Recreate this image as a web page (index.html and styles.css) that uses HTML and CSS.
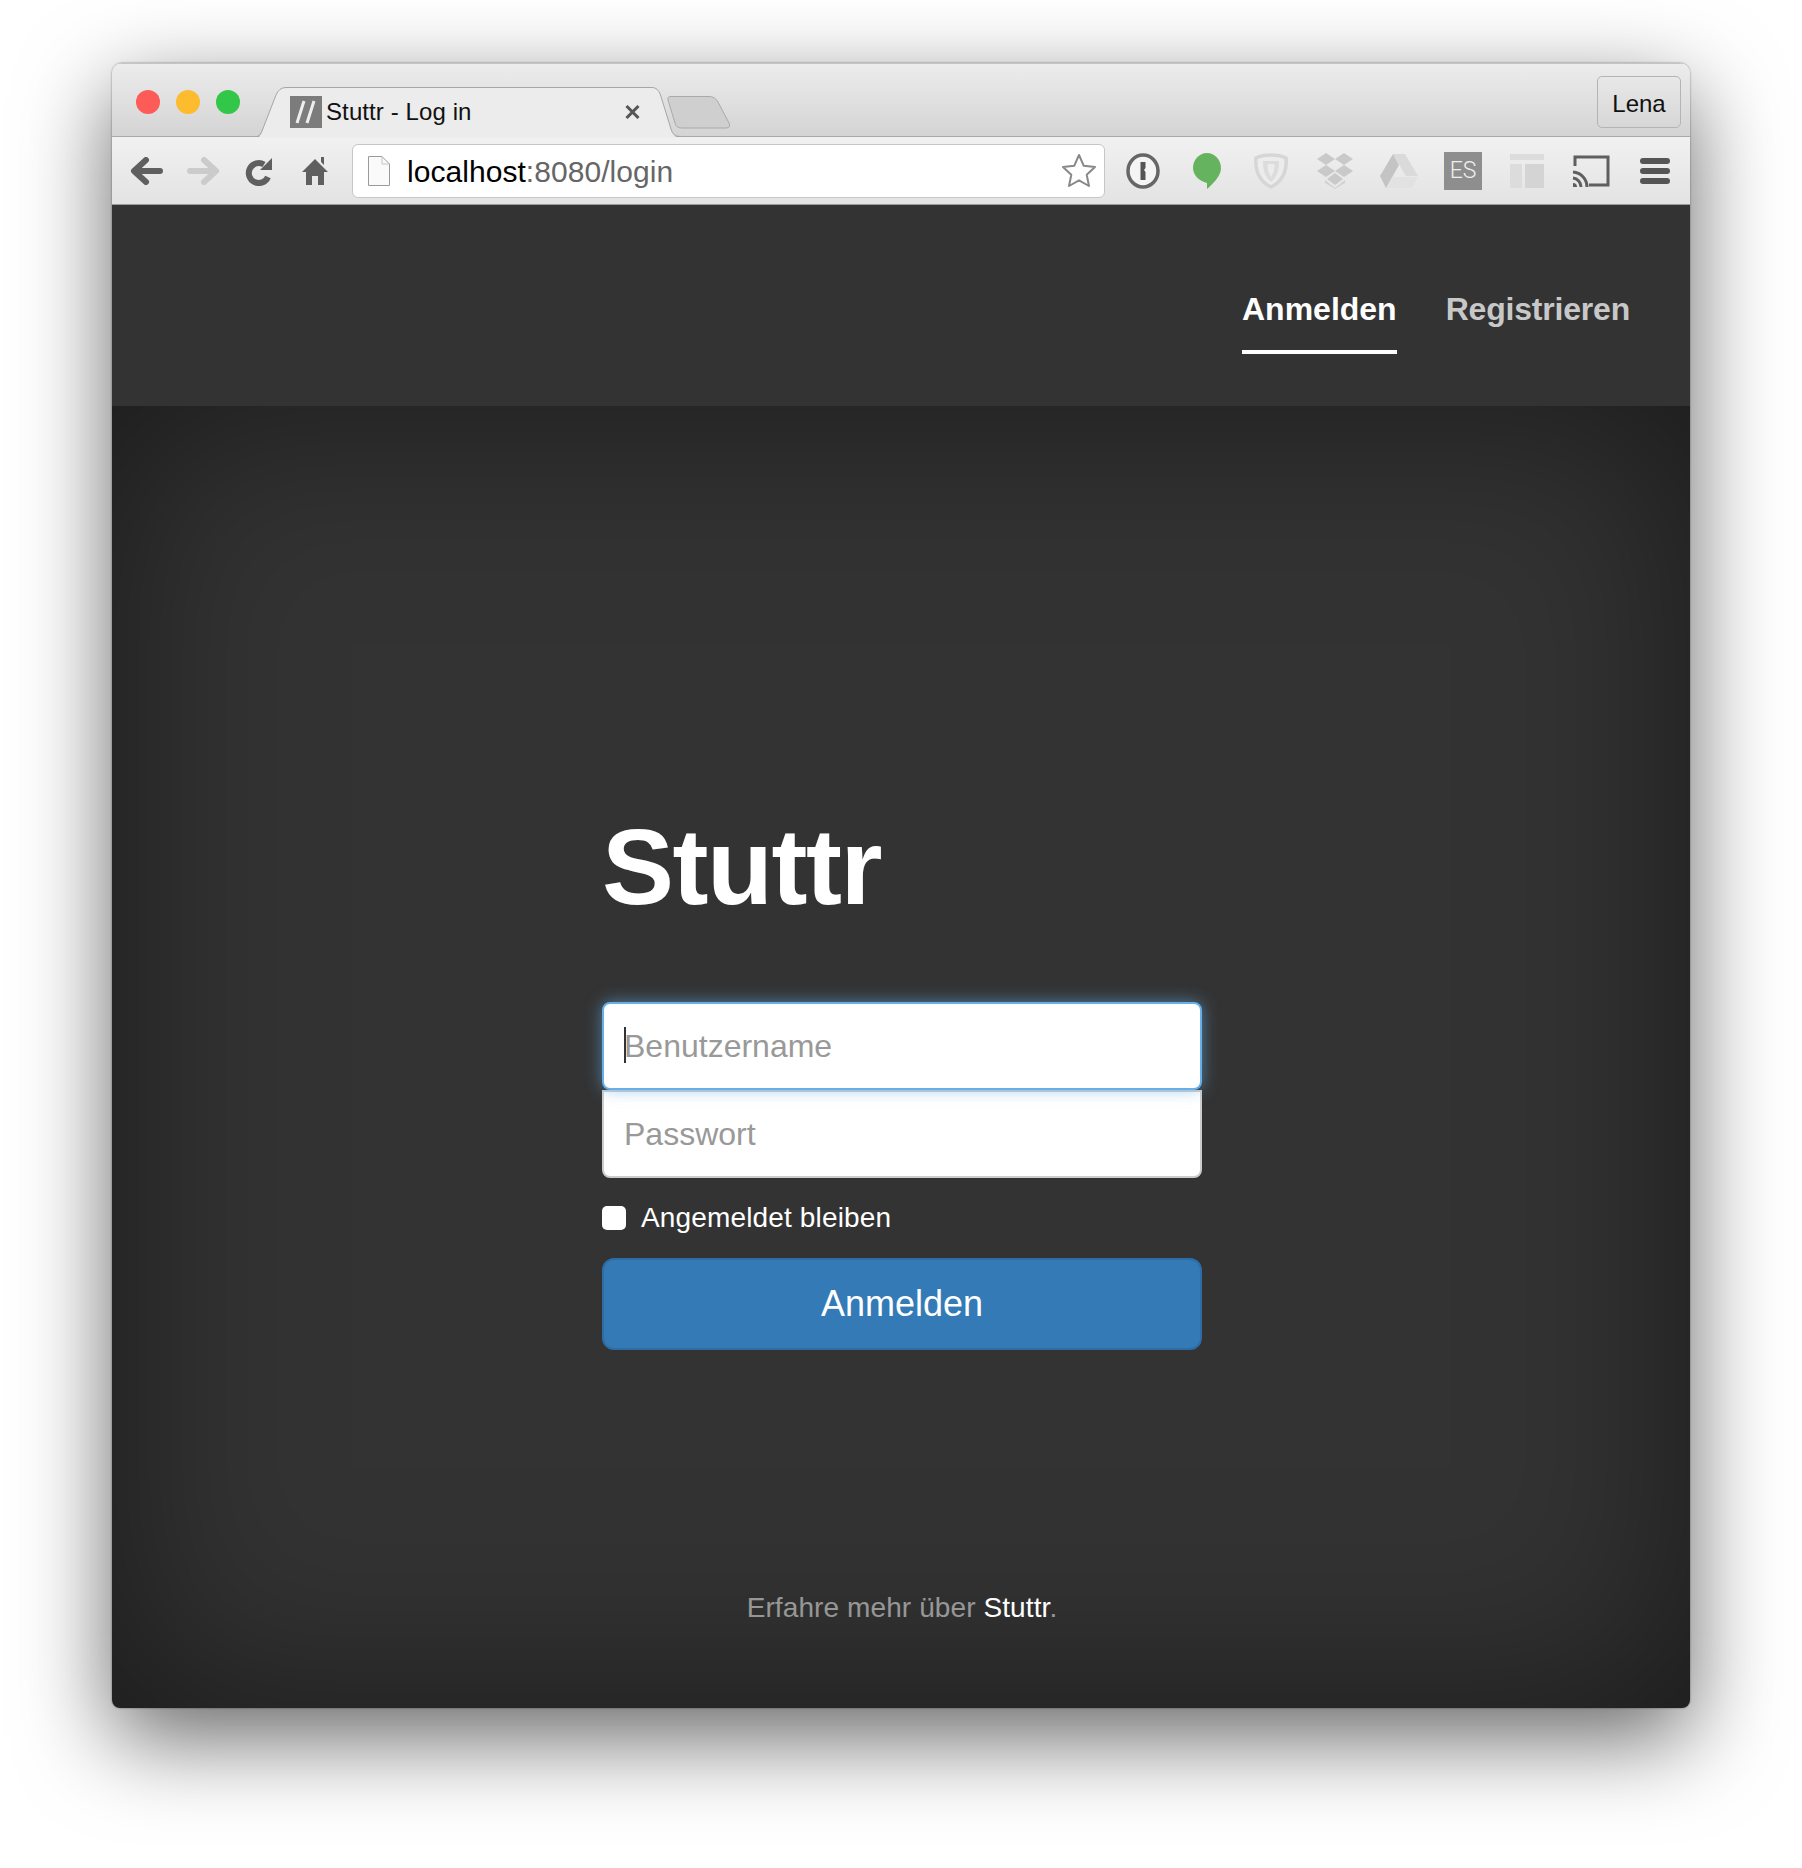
FILE: index.html
```html
<!DOCTYPE html>
<html lang="de">
<head>
    <meta charset="UTF-8">
    <title>Stuttr - Log in</title>
    <link rel="stylesheet" href="styles.css">
</head>
<body>
    <div class="window">
        <!-- Tab-Leiste -->
        <div class="tabstrip">
            <div class="lights">
                <span class="light red"></span>
                <span class="light yellow"></span>
                <span class="light green"></span>
            </div>
            <div class="tab">
                <svg class="tab-shape" width="424" height="51" viewBox="0 0 424 51">
                    <path d="M0 50.5H1Q4 50.5 6 45L20 8Q23 .5 30 .5H396Q402 .5 404.500 8L415 43Q417 50.5 424 50.5Z" fill="#ececec" stroke="none"/>
                    <path d="M0 49.500H1Q4 49.500 6 44L20 8Q23 .5 30 .5H396Q402 .5 404.500 8L415 42Q417 49.500 424 49.500" fill="none" stroke="#a6a6a6"/>
                </svg>
                <svg class="favicon" width="32" height="32" viewBox="0 0 32 32">
                    <rect width="32" height="32" fill="#7c7c7c"/>
                    <path d="M14 5L7 27M24 5L17 27" stroke="#eee" stroke-width="3"/>
                </svg>
                <span class="tab-title">Stuttr - Log in</span>
                <svg class="tab-close" width="15" height="14" viewBox="0 0 15 14">
                    <path d="M1.500 1L13.500 13M13.500 1L1.500 13" stroke="#555" stroke-width="3"/>
                </svg>
            </div>
            <svg class="newtab" width="64" height="33" viewBox="0 0 64 33">
                <path d="M1 4Q0 .5 4 .5H42Q48 .5 51 6L62 27Q64 32 59 32H15Q9 32 8 27Z" fill="#cfcfcf" stroke="#a9a9a9"/>
            </svg>
            <div class="profile">Lena</div>
        </div>

        <!-- Adressleiste -->
        <div class="toolbar">
            <div class="nav-icons">
                <span class="slot">
                    <svg width="34" height="28" viewBox="0 0 34 28"><path d="M30 14H6M16 3L4 14L16 25" fill="none" stroke="#5f5f5f" stroke-width="6" stroke-linecap="round" stroke-linejoin="round"/></svg>
                </span>
                <span class="slot">
                    <svg width="34" height="28" viewBox="0 0 34 28"><path d="M4 14H28M18 3L30 14L18 25" fill="none" stroke="#cbcbcb" stroke-width="6" stroke-linecap="round" stroke-linejoin="round"/></svg>
                </span>
                <span class="slot">
                    <svg width="28" height="30" viewBox="0 0 28 30"><path d="M23 21A10 10 0 1 1 19 8.500" fill="none" stroke="#5f5f5f" stroke-width="6"/><path d="M27 2V14H15Z" fill="#5f5f5f"/></svg>
                </span>
                <span class="slot">
                    <svg width="26" height="30" viewBox="0 0 26 30"><path d="M13 3L26 16H22V29H16V20H10V29H4V16H0ZM19 1H22V9L19 6Z" fill="#5f5f5f"/></svg>
                </span>
            </div>
            <div class="urlbar">
                <svg class="doc-icon" width="22" height="30" viewBox="0 0 22 30">
                    <path d="M.5 .5H14L21.500 8V29.500H.5Z" fill="#fafafa" stroke="#9a9a9a"/>
                    <path d="M14 .5V8H21.500" fill="none" stroke="#c4c4c4"/>
                </svg>
                <span class="url"><span class="host">localhost</span>:8080/login</span>
                <svg class="star" width="36" height="35" viewBox="0 0 36 35">
                    <path d="M18 2L22.800 12.800L34 14L25.700 21.800L28 33L18 27.300L8 33L10.300 21.800L2 14L13.200 12.800Z" fill="#fff" stroke="#888" stroke-width="2" stroke-linejoin="round"/>
                </svg>
            </div>
            <div class="ext-icons">
                <span class="slot">
                    <svg width="34" height="36" viewBox="0 0 34 36"><ellipse cx="17" cy="18" rx="15" ry="16" fill="#f4f4f4" stroke="#666" stroke-width="3.500"/><path d="M14.500 9H19.500V15L18 17L19.500 19V27H14.500Z" fill="#555"/></svg>
                </span>
                <span class="slot">
                    <svg width="28" height="36" viewBox="0 0 28 36"><path d="M14 0C22 0 28 7 28 15C28 22 22 29 14 36V30C6 28 0 22 0 15C0 7 6 0 14 0Z" fill="#66b35f"/></svg>
                </span>
                <span class="slot">
                    <svg width="34" height="36" viewBox="0 0 34 36"><path d="M17 2C22 2 28 3 32 5C33 17 29 28 17 34C5 28 1 17 2 5C6 3 12 2 17 2Z" fill="#ececec" stroke="#d6d6d6" stroke-width="3.500"/><path d="M9 8H25C25 18 23 24 17 29C11 24 9 18 9 8Z" fill="#dcdcdc"/><path d="M13.500 11H20.500C20.500 17 19 21 17 24C15 21 13.500 17 13.500 11Z" fill="#ececec"/></svg>
                </span>
                <span class="slot">
                    <svg width="38" height="36" viewBox="0 0 38 36"><path d="M10 0L19 6L10 12L1 6ZM28 0L37 6L28 12L19 6ZM10 12L19 18L10 24L1 18ZM28 12L37 18L28 24L19 18ZM19 20L27 26L19 32L11 26Z" fill="#c9c9c9"/><path d="M9 27L19 35L29 27V30L19 36L9 30Z" fill="#d2d2d2"/></svg>
                </span>
                <span class="slot">
                    <svg width="38" height="34" viewBox="0 0 38 34"><path d="M13 0H25L38 22H26Z" fill="#dadada"/><path d="M13 0L19 11L6 34L0 22Z" fill="#c4c4c4"/><path d="M13 23H38L32 34H7Z" fill="#e2e2e2"/></svg>
                </span>
                <span class="slot">
                    <span class="ext-es">ES</span>
                </span>
                <span class="slot">
                    <svg width="34" height="34" viewBox="0 0 34 34"><rect width="34" height="6" fill="#dcdcdc"/><rect y="10" width="12" height="24" fill="#dcdcdc"/><rect x="15" y="10" width="19" height="24" fill="#d4d4d4"/></svg>
                </span>
                <span class="slot">
                    <svg width="38" height="34" viewBox="0 0 38 34"><path d="M3 12V3H36V31H17" fill="none" stroke="#5f5f5f" stroke-width="3"/><path d="M1 18A15 15 0 0 1 15 33M1 24A9 9 0 0 1 9 33" fill="none" stroke="#5f5f5f" stroke-width="3"/><path d="M1 29A4 4 0 0 1 5 33H1Z" fill="#5f5f5f"/></svg>
                </span>
                <span class="slot">
                    <span class="menu-icon"><span></span><span></span><span></span></span>
                </span>
            </div>
        </div>

        <div class="site-nav">
            <a class="nav-link active" href="#">Anmelden</a>
            <a class="nav-link" href="#">Registrieren</a>
        </div>

        <div class="cover">
            <form class="login-form">
                <h1 class="brand">Stuttr</h1>
                <div class="field-group">
                    <input class="field focused" type="text" placeholder="Benutzername">
                    <span class="caret"></span>
                    <input class="field" type="password" placeholder="Passwort">
                </div>
                <label class="remember">
                    <input type="checkbox">
                    <span>Angemeldet bleiben</span>
                </label>
                <button class="submit-btn" type="button">Anmelden</button>
            </form>
            <p class="footer-note">Erfahre mehr über <a href="#">Stuttr</a>.</p>
        </div>
    </div>
</body>
</html>
```

FILE: styles.css
```css
body {
    margin: 0;
    padding: 63px 112px 160px;
    background: #fff;
    font-family: "Liberation Sans", Arial, sans-serif;
}
.window {
    display: flex;
    flex-direction: column;
    height: 1645px;
    border-radius: 10px 10px 8px 8px;
    overflow: hidden;
    box-shadow: 0 30px 90px rgba(0, 0, 0, 0.6), 0 0 2px rgba(0, 0, 0, 0.5);
}

/* browser chrome */
.tabstrip {
    display: flex;
    align-items: flex-start;
    box-sizing: border-box;
    height: 74px;
    padding-left: 24px;
    background: linear-gradient(#ececec, #d4d4d4);
    border-top: 1px solid #c4c4c4;
    border-bottom: 1px solid #a9a9a9;
}
.lights {
    display: flex;
    gap: 16px;
    margin-top: 26px;
}
.light {
    width: 24px;
    height: 24px;
    border-radius: 50%;
}
.red { background: #fc5b57; }
.yellow { background: #fdbb2e; }
.green { background: #32c748; }
.tab {
    position: relative;
    z-index: 1;
    display: flex;
    align-items: flex-start;
    box-sizing: border-box;
    width: 424px;
    height: 50px;
    margin: 23px 0 0 16px;
    padding: 9px 0 0 34px;
    font-size: 24px;
    color: #111;
}
.tab-shape {
    position: absolute;
    left: 0;
    top: 0;
}
.favicon, .tab-title, .tab-close {
    position: relative;
}
.tab-title {
    margin-left: 4px;
    line-height: 32px;
    letter-spacing: 0.1px;
}
.tab-close {
    margin: 9px 0 0 153px;
}
.newtab {
    margin: 32px 0 0 -13px;
}
.profile {
    box-sizing: border-box;
    width: 84px;
    height: 52px;
    margin: 12px 9px 0 auto;
    border: 1px solid #b4b4b4;
    border-radius: 5px;
    font-size: 24px;
    line-height: 53px;
    text-align: center;
    color: #111;
}
.toolbar {
    display: flex;
    align-items: center;
    box-sizing: border-box;
    height: 68px;
    padding-left: 7px;
    background: linear-gradient(#f1f1f1, #e3e3e3);
    border-bottom: 1px solid #9c9c9c;
}
.nav-icons, .ext-icons {
    display: flex;
    align-items: center;
}
.slot {
    display: flex;
    align-items: center;
    justify-content: center;
    width: 56px;
}
.ext-icons .slot {
    width: 64px;
}
.urlbar {
    display: flex;
    align-items: center;
    box-sizing: border-box;
    width: 753px;
    height: 54px;
    margin: 0 6px 0 9px;
    padding: 0 7px 0 15px;
    background: #fff;
    border: 1px solid #c6c6c6;
    border-radius: 6px;
}
.url {
    margin-left: 17px;
    padding-top: 2px;
    font-size: 30px;
    letter-spacing: 0.05px;
    color: #666;
}
.host {
    color: #000;
}
.star {
    margin-left: auto;
}
.ext-es {
    width: 38px;
    height: 38px;
    background: #8e8e8e;
    color: #eee;
    font-family: Roboto, sans-serif;
    font-size: 23px;
    font-weight: 300;
    line-height: 38px;
    text-align: center;
}
.menu-icon {
    display: flex;
    flex-direction: column;
    gap: 4px;
    width: 30px;
}
.menu-icon span {
    height: 6px;
    background: #555;
    border-radius: 3px;
}

/* page */
.site-nav {
    display: flex;
    justify-content: flex-end;
    gap: 49px;
    box-sizing: border-box;
    height: 201px;
    padding: 82px 60px 0 0;
    background: #333;
}
.nav-link {
    align-self: flex-start;
    padding-bottom: 19px;
    border-bottom: 4px solid transparent;
    font-size: 32px;
    font-weight: bold;
    line-height: 44px;
    letter-spacing: -0.2px;
    color: #c8c8c8;
    text-decoration: none;
}
.nav-link.active {
    letter-spacing: 0;
    color: #fff;
    border-bottom-color: #fff;
}
.cover {
    flex: 1;
    display: flex;
    flex-direction: column;
    align-items: center;
    padding-left: 2px;
    background: #333;
    box-shadow: inset 0 0 200px rgba(0, 0, 0, 0.5);
}
.login-form {
    width: 600px;
    padding-top: 404px;
}
.brand {
    margin: 0 0 78px;
    font-size: 108px;
    font-weight: bold;
    line-height: 114px;
    letter-spacing: -1.5px;
    color: #fff;
}
.field-group {
    position: relative;
}
.field {
    display: block;
    box-sizing: border-box;
    width: 100%;
    height: 88px;
    padding: 0 20px;
    background: #fff;
    border: 2px solid #ccc;
    border-radius: 0 0 8px 8px;
    font-family: inherit;
    font-size: 32px;
    outline: none;
}
.field::placeholder {
    color: #999;
    opacity: 1;
}
.field.focused {
    position: relative;
    z-index: 1;
    border-color: #66afe9;
    border-radius: 8px;
    box-shadow: 0 0 16px rgba(102, 175, 233, 0.6);
}
.caret {
    position: absolute;
    z-index: 2;
    left: 22px;
    top: 25px;
    width: 2px;
    height: 36px;
    background: #333;
}
.remember {
    display: flex;
    align-items: center;
    gap: 15px;
    margin-top: 20px;
    font-size: 28px;
    line-height: 40px;
    letter-spacing: 0.15px;
    color: #fff;
}
.remember input {
    appearance: none;
    width: 24px;
    height: 24px;
    margin: 0;
    background: #fff;
    border-radius: 5px;
}
.submit-btn {
    display: block;
    width: 100%;
    height: 92px;
    margin-top: 20px;
    background: #337ab7;
    border: 2px solid #2e6da4;
    border-radius: 12px;
    font-family: inherit;
    font-size: 36px;
    color: #fff;
}
.footer-note {
    margin: auto 0 0;
    padding-bottom: 80px;
    font-size: 28px;
    line-height: 40px;
    letter-spacing: 0.1px;
    color: rgba(255, 255, 255, 0.5);
}
.footer-note a {
    color: #fff;
    text-decoration: none;
}
```
